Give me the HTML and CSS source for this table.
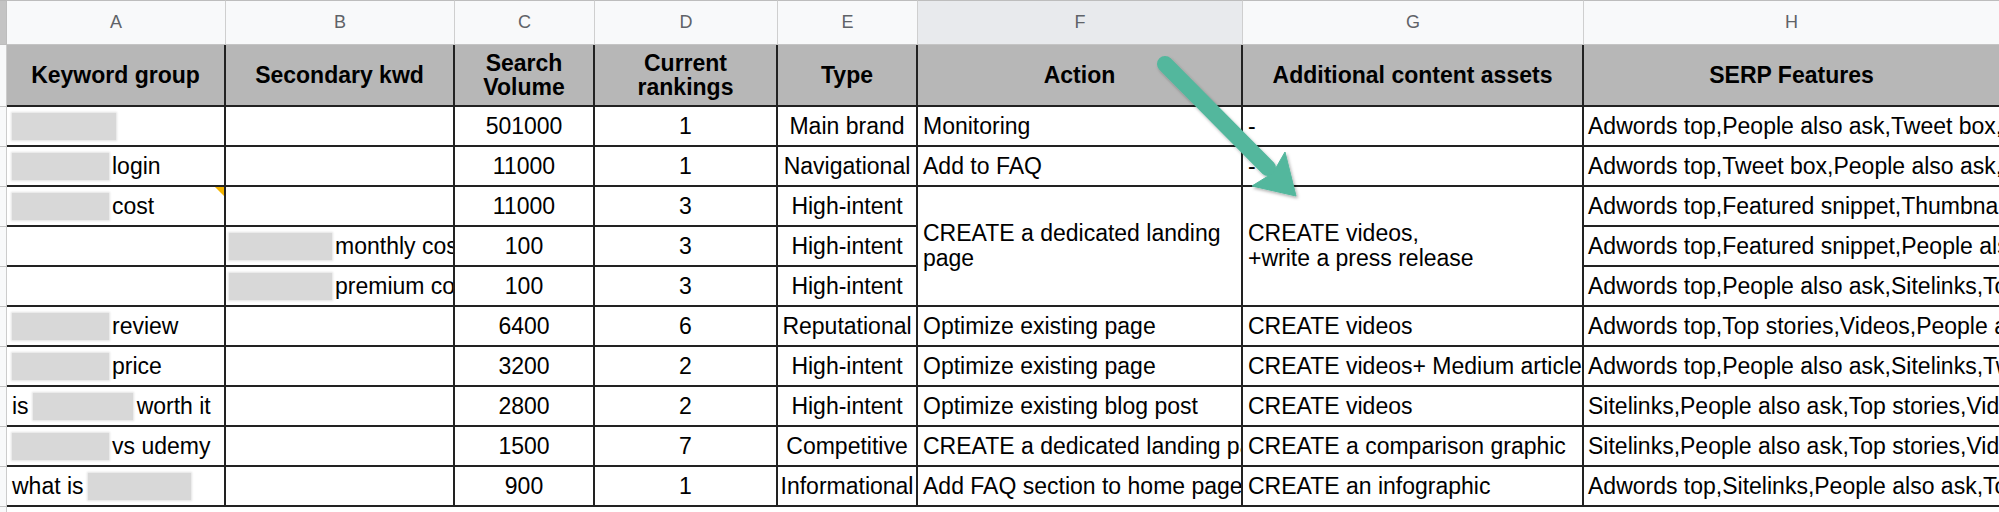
FILE: index.html
```html
<!DOCTYPE html>
<html>
<head>
<meta charset="utf-8">
<link rel="stylesheet" href="styles.css">
</head>
<body>
<div class="sheet">
  <div class="grid">
    <div class="corner"></div>
    <div class="col">A</div>
    <div class="col">B</div>
    <div class="col">C</div>
    <div class="col">D</div>
    <div class="col">E</div>
    <div class="col col-sel">F</div>
    <div class="col">G</div>
    <div class="col col-last">H</div>

    <div class="rh"></div>
    <div class="th">Keyword group</div>
    <div class="th">Secondary kwd</div>
    <div class="th">Search<br>Volume</div>
    <div class="th">Current<br>rankings</div>
    <div class="th">Type</div>
    <div class="th">Action</div>
    <div class="th">Additional content assets</div>
    <div class="th th-last">SERP Features</div>

    <div class="rh"></div>
    <div class="td"><span class="redact w104"></span></div>
    <div class="td"></div>
    <div class="td c">501000</div>
    <div class="td c">1</div>
    <div class="td c">Main brand</div>
    <div class="td">Monitoring</div>
    <div class="td">-</div>
    <div class="td last">Adwords top,People also ask,Tweet box,Sitelinks</div>

    <div class="rh"></div>
    <div class="td"><span class="redact w97"></span>login</div>
    <div class="td"></div>
    <div class="td c">11000</div>
    <div class="td c">1</div>
    <div class="td c">Navigational</div>
    <div class="td">Add to FAQ</div>
    <div class="td">-</div>
    <div class="td last">Adwords top,Tweet box,People also ask,Sitelinks</div>

    <div class="rh"></div>
    <div class="td note"><span class="redact w97"></span>cost<span class="tri"></span></div>
    <div class="td"></div>
    <div class="td c">11000</div>
    <div class="td c">3</div>
    <div class="td c">High-intent</div>
    <div class="td merged">CREATE a dedicated landing page</div>
    <div class="td merged">CREATE videos,<br>+write a press release</div>
    <div class="td last">Adwords top,Featured snippet,Thumbnails,People also ask</div>

    <div class="rh"></div>
    <div class="td"></div>
    <div class="td tight"><span class="redact w103"></span>monthly cost</div>
    <div class="td c">100</div>
    <div class="td c">3</div>
    <div class="td c">High-intent</div>
    <div class="td last">Adwords top,Featured snippet,People also ask</div>

    <div class="rh"></div>
    <div class="td"></div>
    <div class="td tight"><span class="redact w103"></span>premium cost</div>
    <div class="td c">100</div>
    <div class="td c">3</div>
    <div class="td c">High-intent</div>
    <div class="td last">Adwords top,People also ask,Sitelinks,Top stories</div>

    <div class="rh"></div>
    <div class="td"><span class="redact w97"></span>review</div>
    <div class="td"></div>
    <div class="td c">6400</div>
    <div class="td c">6</div>
    <div class="td c">Reputational</div>
    <div class="td">Optimize existing page</div>
    <div class="td">CREATE videos</div>
    <div class="td last">Adwords top,Top stories,Videos,People also ask</div>

    <div class="rh"></div>
    <div class="td"><span class="redact w97"></span>price</div>
    <div class="td"></div>
    <div class="td c">3200</div>
    <div class="td c">2</div>
    <div class="td c">High-intent</div>
    <div class="td">Optimize existing page</div>
    <div class="td">CREATE videos+ Medium article</div>
    <div class="td last">Adwords top,People also ask,Sitelinks,Tweet box</div>

    <div class="rh"></div>
    <div class="td">is<span class="redact w100 mid"></span>worth it</div>
    <div class="td"></div>
    <div class="td c">2800</div>
    <div class="td c">2</div>
    <div class="td c">High-intent</div>
    <div class="td">Optimize existing blog post</div>
    <div class="td">CREATE videos</div>
    <div class="td last">Sitelinks,People also ask,Top stories,Videos</div>

    <div class="rh"></div>
    <div class="td"><span class="redact w97"></span>vs udemy</div>
    <div class="td"></div>
    <div class="td c">1500</div>
    <div class="td c">7</div>
    <div class="td c">Competitive</div>
    <div class="td">CREATE a dedicated landing page</div>
    <div class="td">CREATE a comparison graphic</div>
    <div class="td last">Sitelinks,People also ask,Top stories,Videos</div>

    <div class="rh"></div>
    <div class="td">what is<span class="redact w103 mid"></span></div>
    <div class="td"></div>
    <div class="td c">900</div>
    <div class="td c">1</div>
    <div class="td c">Informational</div>
    <div class="td">Add FAQ section to home page</div>
    <div class="td">CREATE an infographic</div>
    <div class="td last">Adwords top,Sitelinks,People also ask,Top stories</div>

    <div class="rh rh-end"></div>
  </div>

  <svg class="arrow" width="1999" height="512" viewBox="0 0 1999 512" xmlns="http://www.w3.org/2000/svg">
    <defs>
      <filter id="sh" x="-20%" y="-20%" width="140%" height="140%">
        <feDropShadow dx="1.5" dy="2" stdDeviation="1.5" flood-color="#000" flood-opacity="0.3"/>
      </filter>
    </defs>
    <g filter="url(#sh)" fill="#53b79d" stroke="#53b79d">
      <line x1="1165" y1="64" x2="1268" y2="168" stroke-width="16" stroke-linecap="round"/>
      <polygon points="1296,196 1285,152 1273,173 1252,186" stroke-width="1" stroke-linejoin="round"/>
    </g>
  </svg>
</div>
</body>
</html>
```

FILE: styles.css
```css
* { box-sizing: border-box; }

html, body {
  margin: 0;
  padding: 0;
  background: #ffffff;
  overflow: hidden;
}

.sheet {
  position: relative;
  width: 1999px;
  height: 512px;
  overflow: hidden;
  font-family: "Liberation Sans", Arial, sans-serif;
  color: #000;
}

.grid {
  display: grid;
  grid-template-columns: 7px 219px 229px 140px 183px 140px 325px 341px 415px;
  grid-template-rows: 45px 62px repeat(10, 40px) 5px;
}

.corner {
  background: #c4c4c4;
  border-right: 1px solid #bdbdbd;
  border-bottom: 1px solid #bdbdbd;
  border-top: 1px solid #b8b8b8;
}

.col {
  display: flex;
  align-items: center;
  justify-content: center;
  background: #f8f9fa;
  border-top: 1px solid #bdbdbd;
  border-right: 1px solid #cfcfcf;
  border-bottom: 1px solid #c4c4c4;
  font-size: 18px;
  color: #5f6368;
}

.col-sel { background: #e8eaed; }
.col-last { border-right: none; }

.rh {
  background: #f8f9fa;
  border-right: 1px solid #cccccc;
  border-bottom: 1px solid #c4c4c4;
}

.rh-end { border-bottom: none; }

.th {
  display: flex;
  align-items: center;
  justify-content: center;
  text-align: center;
  background: #b7b7b7;
  border-right: 2px solid #222;
  border-bottom: 2px solid #222;
  font-weight: bold;
  font-size: 23px;
  line-height: 24px;
  padding: 0 4px;
}

.th-last { border-right: none; }

.td {
  position: relative;
  display: flex;
  align-items: center;
  white-space: nowrap;
  overflow: hidden;
  border-right: 2px solid #222;
  border-bottom: 2px solid #222;
  padding: 0 5px;
  font-size: 23px;
  line-height: 25px;
}

.td.c { justify-content: center; padding: 0 2px; }
.td.last { border-right: none; padding-left: 4px; }
.td.tight { padding-left: 3px; }

.td.merged {
  grid-row: span 3;
  white-space: normal;
}

.redact {
  display: inline-block;
  height: 27px;
  margin-right: 3px;
  background: #d8d8d8;
  box-shadow: 0 0 2px 1px #e2e2e2;
  flex: none;
}

.redact.mid {
  margin-left: 4px;
  margin-right: 4px;
}

.w97 { width: 97px; }
.w100 { width: 100px; }
.w103 { width: 103px; }
.w104 { width: 104px; }

.tri {
  position: absolute;
  top: 0;
  right: 0;
  width: 0;
  height: 0;
  border-top: 9px solid #f4b400;
  border-left: 9px solid transparent;
}

.arrow {
  position: absolute;
  top: 0;
  left: 0;
  pointer-events: none;
}
```
